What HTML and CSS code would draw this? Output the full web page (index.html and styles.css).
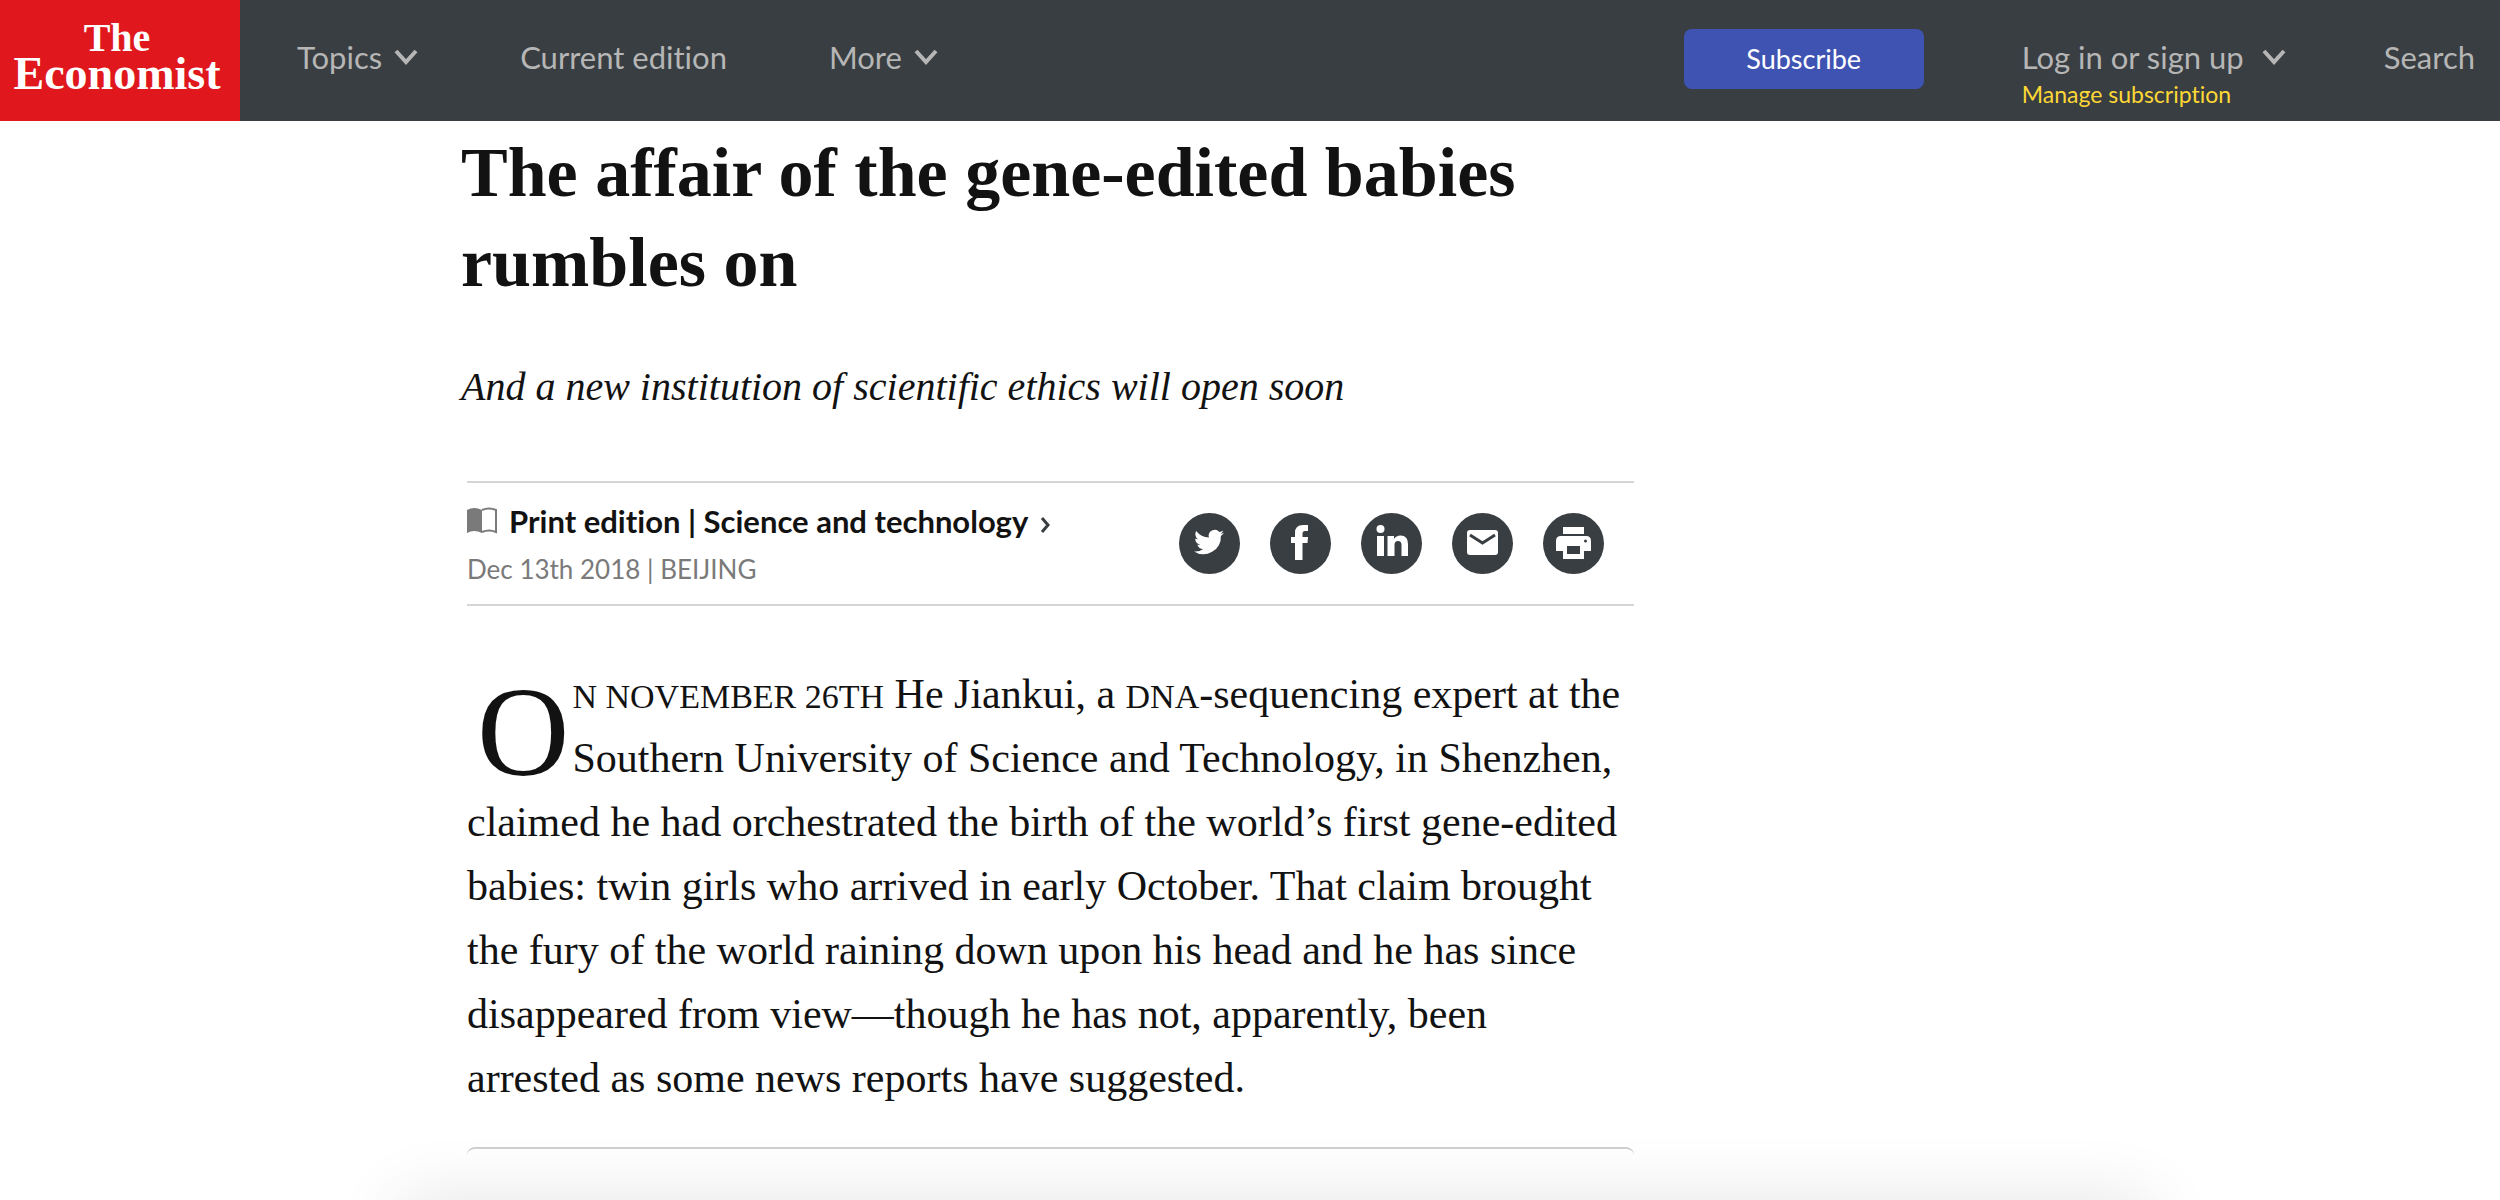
FILE: index.html
```html
<!DOCTYPE html>
<html lang="en">
<head>
<meta charset="utf-8">
<title>The affair of the gene-edited babies rumbles on</title>
<link rel="stylesheet" href="styles.css">
</head>
<body>
<header class="masthead">
  <a class="logo" href="#"><span class="logo-the">The</span><span class="logo-name">Economist</span></a>
  <nav class="nav">
    <button class="nav-item" type="button">Topics
      <svg class="chevron" viewBox="0 0 24 16"><path d="M2 2l10 11L22 2"/></svg></button>
    <a class="nav-item" href="#">Current edition</a>
    <button class="nav-item" type="button">More
      <svg class="chevron" viewBox="0 0 24 16"><path d="M2 2l10 11L22 2"/></svg></button>
  </nav>
  <div class="tools">
    <button class="subscribe" type="button">Subscribe</button>
    <div class="account">
      <button class="nav-item nav-item-wide" type="button">Log in or sign up
        <svg class="chevron" viewBox="0 0 24 16"><path d="M2 2l10 11L22 2"/></svg></button>
      <a class="manage" href="#">Manage subscription</a>
    </div>
    <a class="nav-item" href="#">Search</a>
  </div>
</header>
<main class="page">
  <article class="article">
    <h1 class="headline">The affair of the gene-edited babies rumbles on</h1>
    <p class="rubric">And a new institution of scientific ethics will open soon</p>
    <div class="meta">
      <div class="meta-text">
        <a class="section" href="#">
          <svg class="book" viewBox="0 0 30 28"><path fill="#7a7a7a" d="M0 3Q7-1 15 3V26Q7 22 0 26Z"/><path fill="none" stroke="#7a7a7a" stroke-width="2" d="M15 3Q22 0 29 3V25Q22 22 15 25"/></svg>
          Print edition | Science and technology
          <svg class="arrow" viewBox="0 0 10 16"><path d="M2 1l6 7-6 7"/></svg>
        </a>
        <div class="date">Dec 13th 2018 | BEIJING</div>
      </div>
      <div class="share">
        <a href="#" aria-label="Twitter"><svg viewBox="0 0 61 61"><path transform="translate(15 14) scale(1.25)" d="M24 4.6a10 10 0 0 1-2.800.8 4.900 4.900 0 0 0 2.200-2.700c-1 .6-2 1-3.100 1.200a4.900 4.900 0 0 0-8.400 4.500A14 14 0 0 1 1.700 3.200a4.900 4.900 0 0 0 1.500 6.500 4.900 4.900 0 0 1-2.200-.6 4.900 4.900 0 0 0 3.900 4.900 5 5 0 0 1-2.200.1 4.900 4.900 0 0 0 4.600 3.400A9.900 9.900 0 0 1 0 19.500a14 14 0 0 0 21.500-12.400A10 10 0 0 0 24 4.600z"/></svg></a>
        <a href="#" aria-label="Facebook"><svg viewBox="0 0 61 61"><path d="M38 12v6h-3q-2.500 0-2.500 2.500V24H38l-.5 6h-5v17H25V30h-4v-6h4v-4q0-8 8-8z"/></svg></a>
        <a href="#" aria-label="LinkedIn"><svg viewBox="0 0 61 61"><circle cx="19.500" cy="16" r="4"/><path d="M16 23h7v20h-7zM26.500 23H33v3q2-3.500 6.500-3.500 7.500 0 7.500 8.500v12h-6.500V32q0-4-3.500-4t-3.500 4v11h-7z"/></svg></a>
        <a href="#" aria-label="Email"><svg viewBox="0 0 61 61"><rect x="15" y="17" width="31" height="25" rx="3"/><path class="cut-line" d="M18 22l12.500 8L43 22"/></svg></a>
        <a href="#" aria-label="Print"><svg viewBox="0 0 61 61"><path d="M20 14h21v7H20zM18 23h25q5 0 5 5v10h-7v8H20v-8h-7V28q0-5 5-5z"/><path class="cut" d="M24 33h13v8H24z"/><circle class="cut" cx="42.500" cy="28" r="1.500"/></svg></a>
      </div>
    </div>
    <p class="body-text"><span class="drop-cap">O</span><span class="caps">N NOVEMBER 26TH</span> He Jiankui, a <span class="caps">DNA</span>-sequencing expert at the Southern University of Science and Technology, in Shenzhen, claimed he had orchestrated the birth of the world’s first gene-edited babies: twin girls who arrived in early October. That claim brought the fury of the world raining down upon his head and he has since disappeared from view—though he has not, apparently, been arrested as some news reports have suggested.</p>
    <div class="card"></div>
  </article>
</main>
<div class="bottom-shade"></div>
</body>
</html>
```
FILE: styles.css
```css
* { box-sizing: border-box; }
body {
  margin: 0;
  background: #fff;
  color: #121212;
  font-family: "Liberation Serif", serif;
}
a { color: inherit; text-decoration: none; }
button { margin: 0; padding: 0; border: 0; background: none; color: inherit; font: inherit; cursor: pointer; }

.masthead {
  position: sticky;
  top: 0;
  display: flex;
  height: 121px;
  background: #393e42;
  color: #b6b6b6;
  font: 31px/40px Lato, sans-serif;
  font-variant-ligatures: none;
}
.logo {
  display: flex;
  flex-direction: column;
  align-items: center;
  width: 240px;
  padding: 20px 6px 0 0;
  background: #e0181d;
  color: #fff;
  font-family: "Liberation Serif", serif;
  font-weight: bold;
  line-height: 36px;
}
.logo-the { font-size: 40px; }
.logo-name { font-size: 46px; }
.nav { display: flex; align-items: flex-start; gap: 102px; padding: 37px 0 0 57px; }
.nav-item { display: flex; align-items: center; gap: 12px; font-variant-ligatures: none; }
.nav-item-wide { gap: 18px; }
.chevron { width: 24px; height: 16px; fill: none; stroke: currentColor; stroke-width: 4; }
.tools { display: flex; align-items: flex-start; gap: 98px; margin-left: auto; padding: 37px 25px 0 0; }
.subscribe {
  width: 240px;
  height: 60px;
  margin-top: -8px;
  border-radius: 8px;
  background: #3f53b3;
  color: #fff;
  font-size: 27px;
}
.manage { display: block; color: #fdd835; font-size: 23px; line-height: 34px; }

.page { display: grid; grid-template-columns: 461fr 1173fr 866fr; }
.article { grid-column: 2; }
.headline { margin: 7px 0 0; font-size: 70px; line-height: 90px; }
.rubric { margin: 54px 0 0; font-size: 40px; line-height: 50px; font-style: italic; }
.meta {
  display: flex;
  align-items: center;
  justify-content: space-between;
  height: 125px;
  margin: 69px 0 0 6px;
  padding-right: 30px;
  border: solid #d5d5d5;
  border-width: 2px 0;
  font-family: Lato, sans-serif;
  font-variant-ligatures: none;
  line-height: 48px;
}
.meta-text { padding-top: 3px; }
.section { display: flex; align-items: center; gap: 12px; font-size: 31px; font-weight: bold; }
.book { width: 30px; height: 28px; }
.arrow { width: 10px; height: 16px; margin-top: 8px; fill: none; stroke: #3a3e41; stroke-width: 3; }
.date { color: #7a7a7a; font-size: 26px; }
.share { display: flex; gap: 30px; }
.share a { width: 61px; height: 61px; border-radius: 50%; background: #393e42; }
.share svg { display: block; fill: #fff; }
.share .cut { fill: #393e42; }
.share .cut-line { fill: none; stroke: #393e42; stroke-width: 3; }
.body-text { margin: 56px 0 0 6px; padding-right: 8px; font-size: 42px; line-height: 64px; }
.drop-cap { float: left; height: 128px; padding: 6px 3px 0 10px; font-size: 128px; line-height: 128px; }
.caps { font-size: 34px; line-height: 1; }
.card { height: 53px; margin: 37px 0 0 6px; border-top: 2px solid #cfcfcf; border-radius: 8px; }
.bottom-shade {
  position: fixed;
  right: 14%;
  bottom: -200px;
  left: 16%;
  height: 200px;
  box-shadow: 0 0 70px rgba(0, 0, 0, .11);
}
```
